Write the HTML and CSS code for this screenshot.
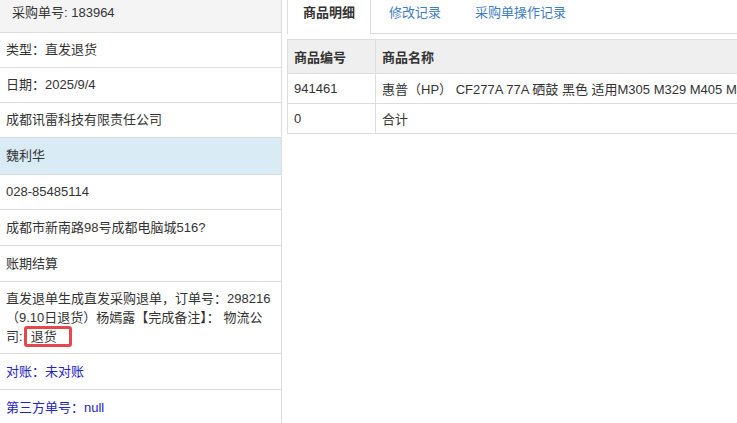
FILE: index.html
```html
<!DOCTYPE html>
<html lang="zh-CN">
<head>
  <meta charset="UTF-8" />
  <title>采购退单详情</title>
  <link rel="stylesheet" href="styles.css">
</head>
<body>
  <div class="page">
    <div class="info">
      <div class="info-head">采购单号: 183964</div>
      <div class="row">类型：直发退货</div>
      <div class="row">日期：2025/9/4</div>
      <div class="row">成都讯雷科技有限责任公司</div>
      <div class="row active">魏利华</div>
      <div class="row">028-85485114</div>
      <div class="row tall">成都市新南路98号成都电脑城516?</div>
      <div class="row tall">账期结算</div>
      <div class="row multi">直发退单生成直发采购退单，订单号：298216（9.10日退货）杨嫣露【完成备注】： 物流公司:<span class="mark">退货</span></div>
      <div class="row link">对账：未对账</div>
      <div class="row link">第三方单号：null</div>
    </div>

    <div class="detail">
      <ul class="tabs">
        <li class="tab current">商品明细</li>
        <li class="tab">修改记录</li>
        <li class="tab">采购单操作记录</li>
      </ul>
      <table class="goods">
        <thead>
          <tr><th class="col-id">商品编号</th><th>商品名称</th></tr>
        </thead>
        <tbody>
          <tr><td>941461</td><td>惠普（HP） CF277A 77A 硒鼓 黑色 适用M305 M329 M405 M429 打印机</td></tr>
          <tr><td>0</td><td>合计</td></tr>
        </tbody>
      </table>
    </div>
  </div>
</body>
</html>
```

FILE: styles.css
```css
body {
  margin: 0;
  font-family: 'Liberation Sans', Arial, 'Noto Sans CJK SC', sans-serif;
  font-size: 13px;
  color: #333;
  background: #fff;
  overflow: hidden;
}
.page {
  display: flex;
  height: 423px;
}
.info {
  width: 281px;
  flex-shrink: 0;
  border-right: 1px solid #ddd;
}
.info-head {
  height: 32px;
  line-height: 26px;
  padding: 0 12px;
  background: #f4f4f4;
  border-bottom: 1px solid #ddd;
}
.row {
  line-height: 34px;
  padding: 0 6px;
  border-bottom: 1px solid #ddd;
}
.row.tall {
  line-height: 35px;
}
.row.active {
  background: #d9ebf5;
  line-height: 36px;
}
.row.multi {
  line-height: 19px;
  padding: 7px 6px;
}
.row.link {
  color: #2424c4;
  line-height: 35px;
}
.mark {
  padding: 0 12px 0 4px;
  margin-left: 1px;
  border: 3px solid #e4474c;
  border-radius: 3px;
}
.detail {
  flex: 1;
  min-width: 0;
  padding-left: 5px;
  overflow: hidden;
}
.tabs {
  display: flex;
  margin: 0;
  padding: 0;
  list-style: none;
  height: 33px;
  border-bottom: 1px solid #ddd;
}
.tab {
  padding: 0 15px;
  margin-right: 2px;
  line-height: 26px;
  height: 33px;
  border: 1px solid transparent;
  border-top: none;
  border-bottom: none;
  color: #3d7dc2;
  white-space: nowrap;
}
.tab.current {
  color: #333;
  font-weight: bold;
  background: #fff;
  border-color: #ddd;
  height: 34px;
}
.goods {
  margin-top: 5px;
  border-collapse: collapse;
  width: 600px;
  white-space: nowrap;
}
.goods th,
.goods td {
  border: 1px solid #ddd;
  padding: 0 6px;
  text-align: left;
}
.goods th {
  background: #efefef;
  height: 33px;
  font-weight: bold;
}
.goods td {
  height: 29px;
}
.goods .col-id {
  width: 75px;
}
```
